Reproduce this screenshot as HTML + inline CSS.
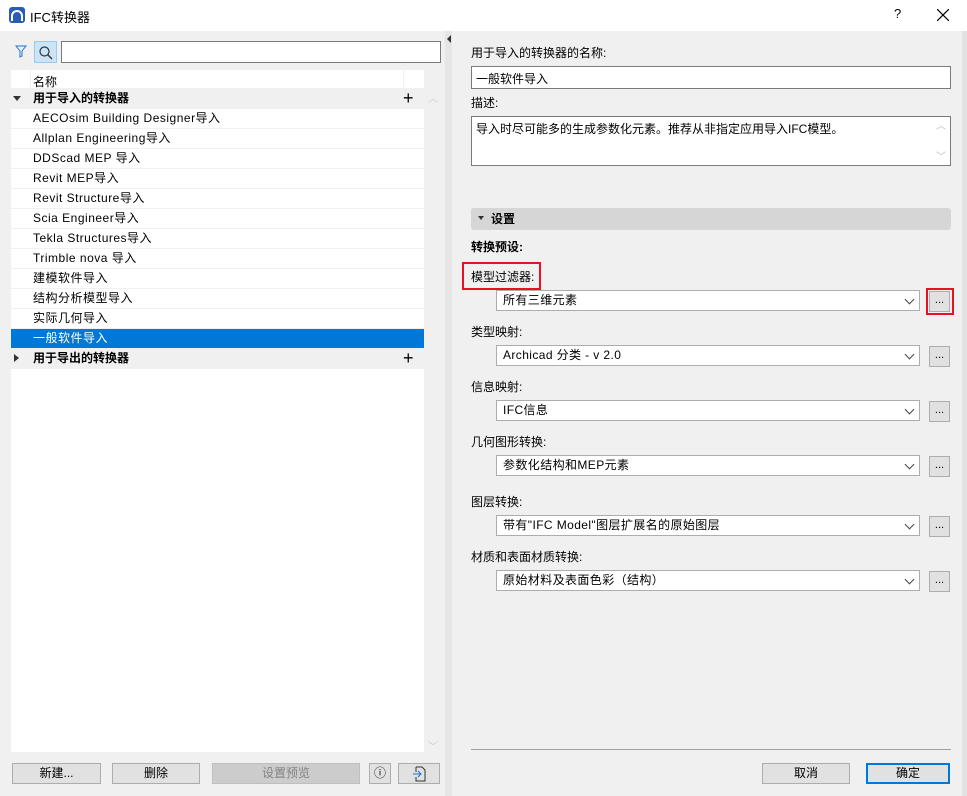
<!DOCTYPE html>
<html><head><meta charset="utf-8"><style>
*{margin:0;padding:0;box-sizing:border-box}
body{width:967px;height:796px;background:#f0f0f0;font-family:"Liberation Sans","Noto Sans CJK SC",sans-serif;font-size:12px;color:#000;position:relative;overflow:hidden}
.a{position:absolute}
.row{position:absolute;left:11px;width:413px;height:20px;line-height:19px;background:#fff;border-bottom:1px solid #f0f0f0;padding-left:22px;white-space:nowrap;letter-spacing:0.5px}
.grp{background:#f0f0f0;font-weight:bold;padding-left:22px;letter-spacing:0}
.lbl{position:absolute;left:471px;line-height:14px}
.sel{position:absolute;left:496px;width:424px;height:21px;background:#fff;border:1px solid #adadad;line-height:19px;padding-left:6px;letter-spacing:0.4px}
.sel:after{content:"";position:absolute;right:6px;top:5px;width:6px;height:6px;border-right:1px solid #444;border-bottom:1px solid #444;transform:rotate(45deg)}
.dot{position:absolute;left:929px;width:21px;height:21px;background:#e1e1e1;border:1px solid #adadad;text-align:center;line-height:17px;font-size:11px}
.btn{position:absolute;top:763px;height:21px;background:#e1e1e1;border:1px solid #adadad;text-align:center;line-height:19px}
</style></head><body>
<div class="a" style="left:0;top:0;width:967px;height:31px;background:#fff"></div>
<svg class="a" style="left:9px;top:7px" width="16" height="16"><rect width="16" height="16" rx="3" fill="#2a5bb8"/><path d="M3 14 V9 A5 5 0 0 1 13 9 V14" stroke="#fff" stroke-width="2" fill="none"/></svg>
<div class="a" style="left:30px;top:7px;font-size:13px">IFC转换器</div>
<div class="a" style="left:894px;top:6px;font-size:13px">?</div>
<svg class="a" style="left:937px;top:9px" width="12" height="12"><path d="M0 0 L12 12 M12 0 L0 12" stroke="#000" stroke-width="1.2"/></svg>

<svg class="a" style="left:15px;top:45px" width="12" height="13"><path d="M1 1 H11 L7 6 V11 L5 12 V6 Z" stroke="#1a73d9" fill="none"/></svg>
<div class="a" style="left:34px;top:41px;width:23px;height:22px;background:#cce4f7;border:1px solid #99c9ef"></div>
<svg class="a" style="left:38px;top:45px" width="16" height="16"><circle cx="6.5" cy="6.5" r="4.5" stroke="#333" fill="none" stroke-width="1.2"/><path d="M10 10 L14 14" stroke="#333" stroke-width="1.4"/></svg>
<div class="a" style="left:61px;top:41px;width:380px;height:22px;background:#fff;border:1px solid #7a7a7a"></div>

<div class="a" style="left:11px;top:70px;width:413px;height:682px;background:#fff"></div>
<div class="a" style="left:11px;top:70px;width:413px;height:19px;background:#fff;border-bottom:1px solid #f0f0f0"></div>
<div class="a" style="left:30px;top:70px;width:1px;height:19px;background:#f0f0f0"></div>
<div class="a" style="left:403px;top:70px;width:1px;height:19px;background:#f0f0f0"></div>
<div class="a" style="left:33px;top:73px">名称</div>
<div class="row grp" style="top:89px">用于导入的转换器</div>
<div class="a" style="left:13px;top:96px;border-left:4px solid transparent;border-right:4px solid transparent;border-top:5px solid #333"></div>
<div class="a" style="left:403px;top:88px;font-size:18px;line-height:20px">+</div>
<div class="row" style="top:109px">AECOsim Building Designer导入</div>
<div class="row" style="top:129px">Allplan Engineering导入</div>
<div class="row" style="top:149px">DDScad MEP 导入</div>
<div class="row" style="top:169px">Revit MEP导入</div>
<div class="row" style="top:189px">Revit Structure导入</div>
<div class="row" style="top:209px">Scia Engineer导入</div>
<div class="row" style="top:229px">Tekla Structures导入</div>
<div class="row" style="top:249px">Trimble nova 导入</div>
<div class="row" style="top:269px">建模软件导入</div>
<div class="row" style="top:289px">结构分析模型导入</div>
<div class="row" style="top:309px">实际几何导入</div>
<div class="row" style="top:329px;background:#0078d7;color:#fff">一般软件导入</div>
<div class="row grp" style="top:349px">用于导出的转换器</div>
<div class="a" style="left:14px;top:354px;border-top:4px solid transparent;border-bottom:4px solid transparent;border-left:5px solid #333"></div>
<div class="a" style="left:403px;top:348px;font-size:18px;line-height:20px">+</div>
<div class="a" style="left:428px;top:90px;color:#ccc;font-size:10px">︿</div>
<div class="a" style="left:428px;top:738px;color:#ccc;font-size:10px">﹀</div>

<div class="btn" style="left:12px;width:89px">新建...</div>
<div class="btn" style="left:112px;width:88px">删除</div>
<div class="btn" style="left:212px;width:148px;background:#ccc;border-color:#bfbfbf;color:#838383">设置预览</div>
<div class="btn" style="left:369px;width:22px">ⓘ</div>
<div class="btn" style="left:398px;width:42px"><svg width="14" height="16" style="margin-top:2px"><path d="M4 1 H10 L13 4 V15 H4 V11 M4 6 V1" stroke="#333" fill="none"/><path d="M1 8 H9 M6 5 L9 8 L6 11" stroke="#1a73d9" fill="none"/></svg></div>

<div class="a" style="left:445px;top:31px;width:7px;height:765px;background:#e6e6e6"></div>
<div class="a" style="left:447px;top:35px;border-top:4px solid transparent;border-bottom:4px solid transparent;border-right:4px solid #333"></div>
<div class="a" style="left:962px;top:31px;width:5px;height:765px;background:#e3e3e3"></div>

<div class="lbl" style="top:46px">用于导入的转换器的名称:</div>
<div class="a" style="left:471px;top:66px;width:480px;height:23px;background:#fff;border:1px solid #7a7a7a;padding:3px 0 0 4px">一般软件导入</div>
<div class="lbl" style="top:96px">描述:</div>
<div class="a" style="left:471px;top:116px;width:480px;height:50px;background:#fff;border:1px solid #7a7a7a;padding:3px 0 0 4px">导入时尽可能多的生成参数化元素。推荐从非指定应用导入IFC模型。</div>
<div class="a" style="left:936px;top:117px;color:#bbb;font-size:10px">︿</div>
<div class="a" style="left:936px;top:148px;color:#bbb;font-size:10px">﹀</div>

<div class="a" style="left:471px;top:208px;width:480px;height:22px;background:#d6d6d6;border-radius:3px;font-weight:bold;line-height:22px;padding-left:20px">设置</div>
<div class="a" style="left:478px;top:216px;border-left:3.5px solid transparent;border-right:3.5px solid transparent;border-top:4px solid #333"></div>
<div class="lbl" style="top:240px;font-weight:bold">转换预设:</div>
<div class="a" style="left:462px;top:262px;width:79px;height:28px;border:2px solid #e81123"></div>
<div class="lbl" style="top:270px">模型过滤器:</div>
<div class="sel" style="top:290px">所有三维元素</div>
<div class="a" style="left:926px;top:288px;width:28px;height:27px;border:2px solid #e81123"></div>
<div class="dot" style="top:291px">...</div>
<div class="lbl" style="top:325px">类型映射:</div>
<div class="sel" style="top:345px">Archicad 分类 - v 2.0</div>
<div class="dot" style="top:346px">...</div>
<div class="lbl" style="top:380px">信息映射:</div>
<div class="sel" style="top:400px">IFC信息</div>
<div class="dot" style="top:401px">...</div>
<div class="lbl" style="top:435px">几何图形转换:</div>
<div class="sel" style="top:455px">参数化结构和MEP元素</div>
<div class="dot" style="top:456px">...</div>
<div class="lbl" style="top:495px">图层转换:</div>
<div class="sel" style="top:515px">带有"IFC Model"图层扩展名的原始图层</div>
<div class="dot" style="top:516px">...</div>
<div class="lbl" style="top:550px">材质和表面材质转换:</div>
<div class="sel" style="top:570px">原始材料及表面色彩（结构）</div>
<div class="dot" style="top:571px">...</div>

<div class="a" style="left:471px;top:749px;width:480px;height:1px;background:#a0a0a0"></div>
<div class="btn" style="left:762px;width:88px">取消</div>
<div class="btn" style="left:866px;width:84px;border:2px solid #0078d7;line-height:17px">确定</div>
</body></html>
